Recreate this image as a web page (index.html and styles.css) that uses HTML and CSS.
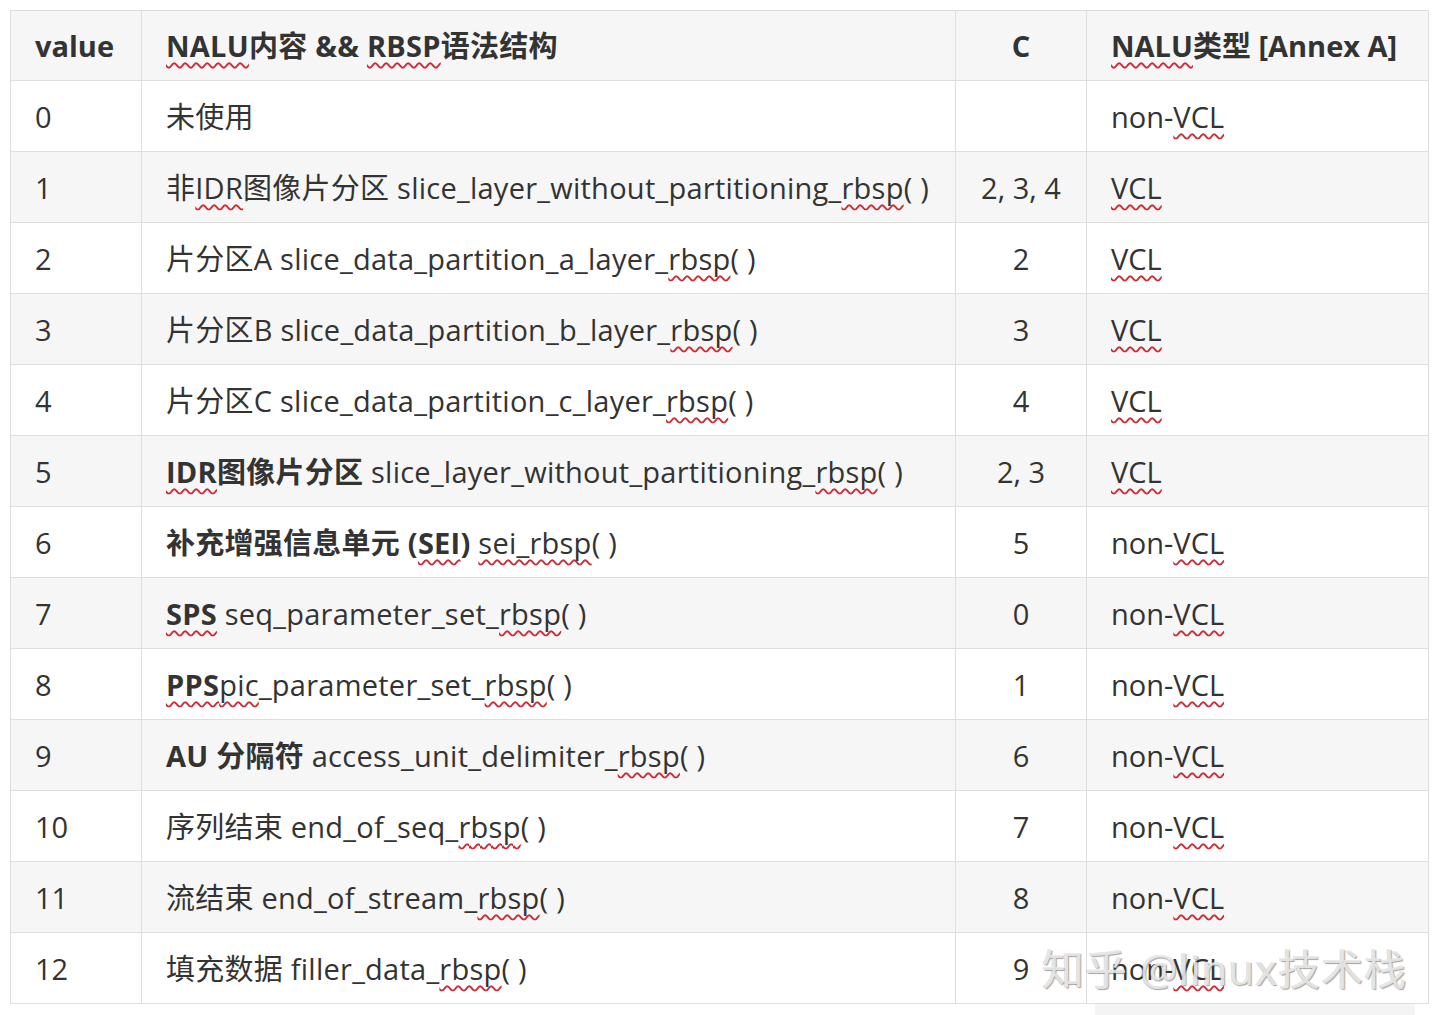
FILE: index.html
```html
<!DOCTYPE html>
<html lang="zh-CN">
<head>
<meta charset="utf-8">
<title>NALU</title>
<link rel="stylesheet" href="styles.css">
</head>
<body>
<div class="wrap">
<table class="nalu">
  <colgroup>
    <col class="c1"><col class="c2"><col class="c3"><col class="c4">
  </colgroup>
  <thead>
    <tr>
      <th>value</th>
      <th class="wide"><span class="sq">NALU</span>内容 &amp;&amp; <span class="sq">RBSP</span>语法结构</th>
      <th class="ctr">C</th>
      <th><span class="sq">NALU</span>类型 [Annex A]</th>
    </tr>
  </thead>
  <tbody>
    <tr><td>0</td><td class="wide">未使用</td><td class="ctr"></td><td>non-<span class="sq">VCL</span></td></tr>
    <tr><td>1</td><td class="wide">非<span class="sq">IDR</span>图像片分区 slice_layer_without_partitioning_<span class="sq">rbsp</span>( )</td><td class="ctr">2, 3, 4</td><td><span class="sq">VCL</span></td></tr>
    <tr><td>2</td><td class="wide">片分区A slice_data_partition_a_layer_<span class="sq">rbsp</span>( )</td><td class="ctr">2</td><td><span class="sq">VCL</span></td></tr>
    <tr><td>3</td><td class="wide">片分区B slice_data_partition_b_layer_<span class="sq">rbsp</span>( )</td><td class="ctr">3</td><td><span class="sq">VCL</span></td></tr>
    <tr><td>4</td><td class="wide">片分区C slice_data_partition_c_layer_<span class="sq">rbsp</span>( )</td><td class="ctr">4</td><td><span class="sq">VCL</span></td></tr>
    <tr><td>5</td><td class="wide"><b><span class="sq">IDR</span>图像片分区</b> slice_layer_without_partitioning_<span class="sq">rbsp</span>( )</td><td class="ctr">2, 3</td><td><span class="sq">VCL</span></td></tr>
    <tr><td>6</td><td class="wide"><b>补充增强信息单元 (<span class="sq">SEI</span>)</b> <span class="sq">sei_rbsp</span>( )</td><td class="ctr">5</td><td>non-<span class="sq">VCL</span></td></tr>
    <tr><td>7</td><td class="wide"><b><span class="sq">SPS</span></b> seq_parameter_set_<span class="sq">rbsp</span>( )</td><td class="ctr">0</td><td>non-<span class="sq">VCL</span></td></tr>
    <tr><td>8</td><td class="wide"><span class="sq"><b>PPS</b>pic</span>_parameter_set_<span class="sq">rbsp</span>( )</td><td class="ctr">1</td><td>non-<span class="sq">VCL</span></td></tr>
    <tr><td>9</td><td class="wide"><b>AU 分隔符</b> access_unit_delimiter_<span class="sq">rbsp</span>( )</td><td class="ctr">6</td><td>non-<span class="sq">VCL</span></td></tr>
    <tr><td>10</td><td class="wide">序列结束 end_of_seq_<span class="sq">rbsp</span>( )</td><td class="ctr">7</td><td>non-<span class="sq">VCL</span></td></tr>
    <tr><td>11</td><td class="wide">流结束 end_of_stream_<span class="sq">rbsp</span>( )</td><td class="ctr">8</td><td>non-<span class="sq">VCL</span></td></tr>
    <tr><td>12</td><td class="wide">填充数据 filler_data_<span class="sq">rbsp</span>( )</td><td class="ctr">9</td><td>non-<span class="sq">VCL</span></td></tr>
  </tbody>
</table>
<div class="footbar"></div>
<div class="watermark">知乎 @linux技术栈</div>
</div>
</body>
</html>
```
FILE: styles.css
```css
html, body {
  margin: 0;
  padding: 0;
  background: #fff;
}
body {
  padding: 10px 0 0 10px;
  font-family: "Open Sans", "Noto Sans CJK SC", sans-serif;
  color: #333;
}
.wrap {
  position: relative;
  width: 1418px;
}
.nalu {
  border-collapse: collapse;
  table-layout: fixed;
  width: 1418px;
  font-size: 29px;
}
.c1 { width: 131px; }
.c2 { width: 814px; }
.c3 { width: 131px; }
.c4 { width: 342px; }
.nalu th,
.nalu td {
  border: 1px solid #dedede;
  height: 70px;
  padding: 0 0 0 24px;
  text-align: left;
  white-space: nowrap;
  vertical-align: middle;
  line-height: 1;
}
.nalu th {
  height: 69px;
  font-weight: 700;
  background: #f6f6f6;
}
.nalu b { font-weight: 700; }
.nalu .ctr {
  text-align: center;
  padding: 0;
}
.nalu tbody tr:nth-child(even) td {
  background: #f6f6f6;
}
.nalu tbody tr:nth-child(odd) td {
  background: #fff;
}
.nalu .wide {
  letter-spacing: 0.25px;
}
.sq {
  text-decoration: underline wavy #cf2a35;
  text-decoration-thickness: 1.6px;
  text-underline-offset: 5px;
  text-decoration-skip-ink: none;
}
.footbar {
  margin: 0 13px 0 1085px;
  height: 12px;
  background: #f4f4f4;
}
.watermark {
  position: absolute;
  left: 1032px;
  top: 926px;
  font-size: 42px;
  letter-spacing: 1px;
  color: rgba(238, 238, 238, 0.85);
  text-shadow: 1px 1px 1px rgba(90, 90, 90, 0.55), -1px 0 0 rgba(150,150,150,0.3);
  white-space: nowrap;
  pointer-events: none;
}
```
